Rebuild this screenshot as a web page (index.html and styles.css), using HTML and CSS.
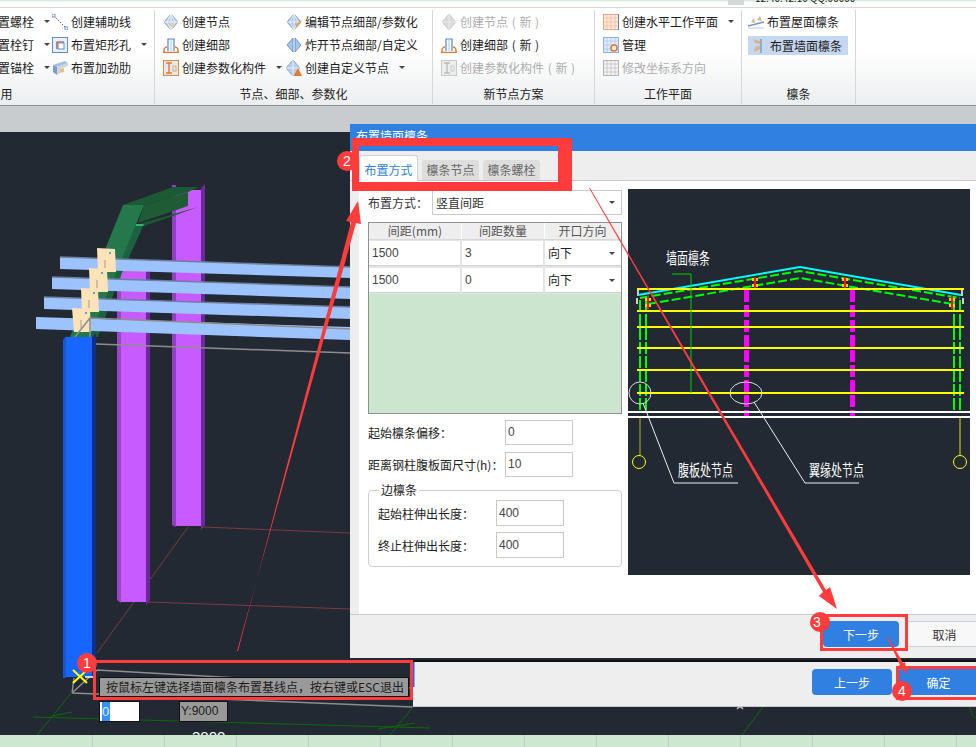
FILE: index.html
```html
<!DOCTYPE html>
<html lang="zh-CN">
<head>
<meta charset="utf-8">
<title>布置墙面檩条</title>
<link rel="stylesheet" href="styles.css">
</head>
<body>
<svg class="defs" width="0" height="0" aria-hidden="true">
  <defs>
    <symbol id="i-node" viewBox="0 0 16 16"><path d="M8 0 15 8 8 16 1 8Z" fill="#b7cde9" stroke="#6f97c8" stroke-width=".8"/><path d="M8 0V16M1 8H15M4 8 8 0 12 8 8 16Z" fill="none" stroke="#fff" stroke-width=".7"/><circle cx="9" cy="11" r="2" fill="#f1c9a0"/></symbol>
    <symbol id="i-node-edit" viewBox="0 0 16 16"><path d="M8 0 15 8 8 16 1 8Z" fill="#a9c5ea" stroke="#5f8fc8" stroke-width=".8"/><path d="M8 0V16M1 8H15M4 8 8 0 12 8 8 16Z" fill="none" stroke="#fff" stroke-width=".7"/><path d="M10 12 15 7" stroke="#e8a33a" stroke-width="2"/></symbol>
    <symbol id="i-node-split" viewBox="0 0 16 16"><path d="M7 1V15L1 8ZM9 1V15L15 8Z" fill="#a9c5ea" stroke="#4f86c8" stroke-width=".8"/></symbol>
    <symbol id="i-node-custom" viewBox="0 0 16 16"><path d="M7 0 14 8 7 16 0 8Z" fill="#b7cde9" stroke="#6f97c8" stroke-width=".8"/><path d="M7 0V16M0 8H14" stroke="#fff" stroke-width=".7"/><path d="M12 8 16 16H8Z" fill="#e8762c"/></symbol>
    <symbol id="i-node-off" viewBox="0 0 16 16"><path d="M8 0 15 8 8 16 1 8Z" fill="#d9d9d9" stroke="#c4c4c4" stroke-width=".8"/><path d="M8 0V16M1 8H15" stroke="#f2f2f2" stroke-width=".8"/></symbol>
    <symbol id="i-detail" viewBox="0 0 16 16"><path d="M5 14V2H11V14" fill="#fff" stroke="#4f86c8" stroke-width="1.2"/><path d="M8 2V14" stroke="#a9c5ea"/><path d="M1 16V13C1 11 3 10 4 10M15 16V13C15 11 13 10 12 10M0 15.5H16" fill="none" stroke="#e8762c" stroke-width="1.4"/></symbol>
    <symbol id="i-param" viewBox="0 0 16 16"><rect x=".5" y=".5" width="15" height="15" fill="#dfeaf7" stroke="#e8863c"/><path d="M3 3H9M3 13H9M6 3V13" stroke="#e8762c" stroke-width="1.4" fill="none"/><rect x="10" y="6" width="3" height="5" fill="none" stroke="#e8a36c"/></symbol>
    <symbol id="i-param-off" viewBox="0 0 16 16"><rect x=".5" y=".5" width="15" height="15" fill="#eee" stroke="#c8c8c8"/><path d="M3 3H9M3 13H9M6 3V13" stroke="#bbb" stroke-width="1.4" fill="none"/><rect x="10" y="6" width="3" height="5" fill="none" stroke="#ccc"/></symbol>
    <symbol id="i-line" viewBox="0 0 16 16"><path d="M1.500 1.500 14.500 14.500" stroke="#555" stroke-dasharray="1.500 1.500"/><rect x="0" y="0" width="3" height="3" fill="#fff" stroke="#3f7fc8" stroke-width=".8"/><rect x="13" y="13" width="3" height="3" fill="#fff" stroke="#3f7fc8" stroke-width=".8"/></symbol>
    <symbol id="i-hole" viewBox="0 0 16 16"><rect x=".5" y=".5" width="15" height="15" fill="#e8f0fa" stroke="#5f8fc8"/><path d="M5 12V5H12" fill="none" stroke="#c8322c" stroke-width="1.2"/><rect x="6" y="6" width="6" height="6" fill="#fff" stroke="#5f8fc8"/></symbol>
    <symbol id="i-rib" viewBox="0 0 16 16"><path d="M1 5 13 1 16 3 5 7Z" fill="#a9c0dc"/><path d="M1 5 5 7V15L1 12Z" fill="#7f9cc0"/><path d="M5 7 16 3V6L8 9V13L5 15Z" fill="#c9d6e6"/><path d="M8 9 12 8V12L8 13Z" fill="#f0c070"/></symbol>
    <symbol id="i-plane" viewBox="0 0 16 16"><rect x=".5" y=".5" width="15" height="15" fill="#fde9dc" stroke="#e8a888"/><path d="M4 1V15M8 1V15M12 1V15M1 4H15M1 8H15M1 12H15" stroke="#efb79a" stroke-width=".7"/><path d="M15.500 0V16" stroke="#4f86c8"/></symbol>
    <symbol id="i-manage" viewBox="0 0 16 16"><rect x=".5" y=".5" width="15" height="15" fill="#dfeafa" stroke="#8fb2e0"/><path d="M4 1V15M8 1V15M12 1V15M1 4H15M1 8H15M1 12H15" stroke="#a9c5ea" stroke-width=".7"/><circle cx="11" cy="11" r="3" fill="#fff" stroke="#e8762c" stroke-width="1.6"/></symbol>
    <symbol id="i-grid-off" viewBox="0 0 16 16"><rect x=".5" y=".5" width="15" height="15" fill="#f3f3f3" stroke="#b5b5b5"/><path d="M4 1V15M8 1V15M12 1V15M1 4H15M1 8H15M1 12H15" stroke="#bdbdbd" stroke-width=".7"/></symbol>
    <symbol id="i-roof" viewBox="0 0 16 16"><path d="M0 12 16 8" stroke="#6f97c8" stroke-width="1.500"/><path d="M3 8 6 4 7 9ZM9 6 12 2 14 7Z" fill="#d8b48a"/><path d="M0 14H16" stroke="#b9cce4"/></symbol>
    <symbol id="i-wall" viewBox="0 0 16 16"><path d="M10 1V15" stroke="#8a9cb4" stroke-width="1.500"/><path d="M2 1 9 3V6L4 5ZM4 9 9 8V11L3 14Z" fill="#d8b48a"/></symbol>
  </defs>
</svg>

<div class="app">
  <div class="topstrip"><span class="topstrip-icon"></span><span class="topstrip-text">12:40:42:10 QQ:00000</span></div>

  <div class="ribbon">
    <section class="group g1">
      <div class="rows rows-g1">
        <div class="item"><span class="blank-icon"></span>布置螺栓<i class="caret"></i></div>
        <div class="item"><svg class="ic"><use href="#i-line"/></svg>创建辅助线</div>
        <div class="item"><span class="blank-icon"></span>布置栓钉<i class="caret"></i></div>
        <div class="item"><svg class="ic"><use href="#i-hole"/></svg>布置矩形孔<i class="caret"></i></div>
        <div class="item"><span class="blank-icon"></span>布置锚栓<i class="caret"></i></div>
        <div class="item"><svg class="ic"><use href="#i-rib"/></svg>布置加劲肋</div>
      </div>
      <div class="group-label">常用</div>
    </section>
    <section class="group g2">
      <div class="rows rows-g2">
        <div class="item"><svg class="ic"><use href="#i-node"/></svg>创建节点</div>
        <div class="item"><svg class="ic"><use href="#i-node-edit"/></svg>编辑节点细部/参数化</div>
        <div class="item"><svg class="ic"><use href="#i-detail"/></svg>创建细部</div>
        <div class="item"><svg class="ic"><use href="#i-node-split"/></svg>炸开节点细部/自定义</div>
        <div class="item"><svg class="ic"><use href="#i-param"/></svg>创建参数化构件<i class="caret"></i></div>
        <div class="item"><svg class="ic"><use href="#i-node-custom"/></svg>创建自定义节点<i class="caret"></i></div>
      </div>
      <div class="group-label">节点、细部、参数化</div>
    </section>
    <section class="group g3">
      <div class="rows">
        <div class="item off"><svg class="ic"><use href="#i-node-off"/></svg><span class="spaced">创建节点 ( 新 )</span></div>
        <div class="item"><svg class="ic"><use href="#i-detail"/></svg><span class="spaced">创建细部 ( 新 )</span></div>
        <div class="item off"><svg class="ic"><use href="#i-param-off"/></svg><span class="spaced">创建参数化构件 ( 新 )</span></div>
      </div>
      <div class="group-label">新节点方案</div>
    </section>
    <section class="group g4">
      <div class="rows">
        <div class="item"><svg class="ic"><use href="#i-plane"/></svg>创建水平工作平面<i class="caret"></i></div>
        <div class="item"><svg class="ic"><use href="#i-manage"/></svg>管理</div>
        <div class="item off"><svg class="ic"><use href="#i-grid-off"/></svg>修改坐标系方向</div>
      </div>
      <div class="group-label">工作平面</div>
    </section>
    <section class="group g5">
      <div class="rows">
        <div class="item"><svg class="ic"><use href="#i-roof"/></svg>布置屋面檩条</div>
        <div class="item active"><svg class="ic"><use href="#i-wall"/></svg>布置墙面檩条</div>
      </div>
      <div class="group-label">檩条</div>
    </section>
  </div>

  <div class="greybar"></div>

  <main class="workspace">
    <svg class="scene" viewBox="0 132 976 603" width="976" height="603">
      <g fill="none" stroke-width="1">
        <path d="M203 527 350 533M148 602 350 609M188 527 97 653" stroke="#7c3a40"/>
        <path d="M72 693 413 707M97 670 413 688M72 693 97 670M72 693 74 678" stroke="#8d8d8d" stroke-width="1.500"/>
        <path d="M33 717 430 728M37 735 72 692M52 716 72 712M390 735 413 707M378 729 415 723M742 735 763 707" stroke="#0c6a0c"/>
        <path d="M970 707C972 716 974 718 976 718" stroke="#0c6a0c"/>
        <path d="M737 709Q740 705 743 709" stroke="#bbbbbb" stroke-width="1.500"/>
      </g>
      <!-- purple columns -->
      <path d="M117 270H121V603L117 600Z" fill="#9a46c8"/>
      <rect x="121" y="270" width="25" height="332" fill="#c85bff"/>
      <path d="M146 270H150V600L146 605Z" fill="#6b2a9c"/>
      <path d="M172 185H176V527L172 525Z" fill="#8f3fc0"/>
      <rect x="176" y="190" width="25" height="336" fill="#c85bff"/>
      <path d="M201 188 205 184V525L201 530Z" fill="#6b2a9c"/>
      <!-- rafter -->
      <path d="M123 205 173 187H199L188 192 144 205Z" fill="#1c5a35"/>
      <path d="M144 205 188 192V206L138 223Z" fill="#1f5c36"/>
      <path d="M139 224 198 207 173 216 144 226Z" fill="#1c5a35"/>
      <path d="M136 224H144L118 282 98 337H90Z" fill="#1b6340"/>
      <path d="M123 205H144L90 337H70Z" fill="#25784c"/>
      <path d="M136 224H144L143 226H136Z" fill="#39b46c"/>
      <!-- purlins -->
      <g fill="#9dc3ff">
        <path d="M60 257 350 267V278L60 269Z"/>
        <path d="M52 277 350 287V299L52 289Z"/>
        <path d="M44 297 350 307V319L44 309Z"/>
        <path d="M36 317 350 327V340L36 329Z"/>
      </g>
      <path d="M60 257 350 267M52 277 350 287M44 297 350 307" stroke="#6f7f9a" stroke-width="1.500" fill="none"/>
      <!-- plates -->
      <g fill="#fde3b8">
        <path d="M97 248 115 249 116 272H98Z"/>
        <path d="M89 268 107 269 108 292H90Z"/>
        <path d="M81 288 98 289 99 312H82Z"/>
        <path d="M72 308 90 309 91 332H74Z"/>
      </g>
      <g fill="#3a8ad0">
        <circle cx="110" cy="253" r="1"/><circle cx="102" cy="273" r="1"/><circle cx="94" cy="293" r="1"/><circle cx="86" cy="313" r="1"/>
      </g>
      <path d="M105 260V268M97 280V288M89 300V308M81 320V328" stroke="#a89c88" fill="none"/>
      <path d="M90 318 350 329M96 344 350 353M75 337 90 318V337" stroke="#8d8d8d" stroke-width="1.500" fill="none"/>
      <!-- blue column -->
      <path d="M63 340 66 336V678H63Z" fill="#1558d0"/>
      <rect x="66" y="337" width="26" height="340" fill="#1666ff"/>
      <path d="M92 338 96 333V674L92 678Z" fill="#0f2f8a"/>
      <!-- cursor -->
      <path d="M73 670 87 683M87 670 73 683" stroke="#ffff00" stroke-width="2"/>
      <path d="M85 677H96" stroke="#fff" stroke-width="1.500"/>
      <text class="scene-dim" x="192" y="742">3000</text>
    </svg>

    <div class="prompt">按鼠标左键选择墙面檩条布置基线点<span class="tc">，</span>按右键或ESC退出</div>
    <div class="coord-x"><span class="coord-sel">0</span></div>
    <div class="coord-y">Y:9000</div>
  </main>

  <div class="bottomstrip"></div>

  <!-- rear dialog footer -->
  <div class="rear-dialog">
    <button class="btn btn-primary btn-prev">上一步</button>
    <button class="btn btn-primary btn-ok">确定</button>
  </div>

  <!-- front dialog -->
  <div class="dialog">
    <div class="dialog-title">布置墙面檩条</div>
    <div class="tabs">
      <div class="tab tab-active">布置方式</div>
      <div class="tab">檩条节点</div>
      <div class="tab">檩条螺栓</div>
    </div>
    <div class="dialog-body">
      <div class="form">
        <div class="select-row">
          <label class="select-label">布置方式<span class="tc">：</span></label>
          <div class="select select-wide">竖直间距<i class="caret"></i></div>
        </div>
        <div class="table">
          <div class="t-row t-head"><div class="th">间距(mm)</div><div class="th">间距数量</div><div class="th">开口方向</div></div>
          <div class="t-row t-line"><div class="td">1500</div><div class="td">3</div><div class="td td-select">向下<i class="caret"></i></div></div>
          <div class="t-row t-line"><div class="td">1500</div><div class="td">0</div><div class="td td-select">向下<i class="caret"></i></div></div>
          <div class="t-fill"></div>
        </div>
        <div class="fields">
          <div class="field"><label class="field-label">起始檩条偏移<span class="tc">：</span></label><div class="input">0</div></div>
          <div class="field"><label class="field-label">距离钢柱腹板面尺寸(h)<span class="tc">：</span></label><div class="input">10</div></div>
        </div>
        <div class="fieldset">
          <span class="legend">边檩条</span>
          <div class="field field-tall"><label class="field-label field-label-inner">起始柱伸出长度<span class="tc">：</span></label><div class="input input-tall">400</div></div>
          <div class="field field-tall"><label class="field-label field-label-inner">终止柱伸出长度<span class="tc">：</span></label><div class="input input-tall">400</div></div>
        </div>
      </div>

      <svg class="cad" viewBox="628 189 342 386" width="342" height="386">
        <rect x="628" y="189" width="342" height="386" fill="#222933"/>
        <g fill="none">
          <path d="M638 288V296M637 298V304M962 288V296M963 298V304" stroke="#ccc" stroke-width="2"/>
          <path d="M640 300V412M646 300V412M960 300V412M954 300V412" stroke="#00ff00" stroke-width="2" stroke-dasharray="12 2"/>
          <path d="M746.500 290V418M852.500 290V418" stroke="#ff00ff" stroke-width="5" stroke-dasharray="12 3"/>
          <path d="M640 298 800 271 960 298" stroke="#00ff00" stroke-width="2" stroke-dasharray="9 3"/>
          <path d="M648 304 800 278 952 304" stroke="#00ff00" stroke-width="2" stroke-dasharray="9 3"/>
          <path d="M638 295 800 267 961 295" stroke="#00ffff" stroke-width="2"/>
          <path d="M637 289H964M637 311H964M637 327H964M637 348H964M637 370H964M637 393H964" stroke="#ffff00" stroke-width="2"/>
          <path d="M672 274H691V393" stroke="#00d000"/>
          <path d="M628 412H970M628 417H970" stroke="#fff" stroke-width="2"/>
          <circle cx="640" cy="393" r="11" stroke="#ddd"/>
          <ellipse cx="746" cy="393" rx="16" ry="11" stroke="#ddd"/>
          <path d="M643 403 674 483H738M754 402 805 483H859" stroke="#eee"/>
          <path d="M640 418V455" stroke="#b8b820"/>
          <path d="M960 418V455" stroke="#e0e020"/>
          <circle cx="639" cy="462" r="6.500" stroke="#ffff00"/>
          <circle cx="960" cy="462" r="6.500" stroke="#ffff00"/>
        </g>
        <g fill="#ffd000">
          <rect x="645" y="298" width="6" height="3"/><rect x="645" y="304" width="6" height="3"/>
          <rect x="752" y="278" width="6" height="3"/><rect x="752" y="284" width="6" height="3"/>
          <rect x="842" y="278" width="6" height="3"/><rect x="842" y="284" width="6" height="3"/>
          <rect x="949" y="298" width="6" height="3"/><rect x="949" y="304" width="6" height="3"/>
        </g>
        <path d="M648 296V309M755 277V288M845 277V288M952 296V309" stroke="#e02020" stroke-width="2"/>
        <text class="cad-text" transform="translate(666 264) scale(1 1.400)">墙面檩条</text>
        <text class="cad-text" transform="translate(678 476) scale(1 1.400)">腹板处节点</text>
        <text class="cad-text" transform="translate(809 476) scale(1 1.400)">翼缘处节点</text>
      </svg>
    </div>
    <div class="dialog-foot">
      <button class="btn btn-primary btn-next">下一步</button>
      <button class="btn btn-plain">取消</button>
    </div>
  </div>

  <!-- annotations -->
  <svg class="marks" viewBox="0 0 976 747" width="976" height="747">
    <rect x="413" y="662" width="1.500" height="25" fill="#1666ff"/>
    <g fill="#ff3b3b">
      <path fill-rule="evenodd" d="M352 138H572V191H352ZM359 146V182H558V146Z"/>
      <path fill-rule="evenodd" d="M820 614H908V651H820ZM823 617V648H905V617Z"/>
      <path fill-rule="evenodd" d="M93 660H413V700H93ZM96 663V697H410V663Z"/>
      <path fill-rule="evenodd" d="M896 666H976V700H896ZM899 669V697H976V669Z"/>
      <path d="M237 651 238 651 351 222 346 221 358 201 361 224 356 223Z"/>
      <path d="M589 188 590 188 826 590 830 587 837 609 819 596 823 592Z"/>
      <path d="M887 637 888 637 903 663 905 662 907 674 898 666 900 665Z"/>
      <circle cx="87" cy="663" r="10"/>
      <circle cx="347" cy="161" r="10"/>
      <circle cx="820" cy="622" r="10"/>
      <circle cx="902" cy="691" r="10"/>
    </g>
    <g class="badge-text">
      <text x="87" y="668">1</text>
      <text x="347" y="166">2</text>
      <text x="817" y="627">3</text>
      <text x="902" y="696">4</text>
    </g>
  </svg>
</div>
</body>
</html>
```

FILE: styles.css
```css
* { box-sizing: border-box; }

html, body {
  margin: 0;
  padding: 0;
  height: 100%;
  overflow: hidden;
}

body {
  font-family: "Noto Sans CJK SC", "Liberation Sans", sans-serif;
  font-size: 12px;
  color: #1c1c1c;
}

.defs { position: absolute; }
.tc { font-family: "Noto Sans CJK TC", sans-serif; }

.app {
  position: relative;
  width: 976px;
  height: 747px;
  display: flex;
  flex-direction: column;
  overflow: hidden;
  background: #222933;
}

/* top */
.topstrip {
  height: 8px;
  flex: none;
  overflow: hidden;
  display: flex;
  background: linear-gradient(#d9eedb 0, #d9eedb 1px, #fff 2px, #fff 7px, #d6d8da 7px);
  line-height: 10px;
  padding-left: 728px;
  font-size: 10px;
}
.topstrip-icon { width: 16px; height: 5px; flex: none; margin-right: 11px; background: #d8d8d8; }
.topstrip-text { display: block; margin-top: -7px; color: #222; }

/* ribbon */
.ribbon {
  height: 98px;
  flex: none;
  display: flex;
  background: linear-gradient(#fff 45%, #eceeef 100%);
  border-bottom: 1px solid #8f9193;
  box-shadow: 0 1px 0 #b4b6b8;
}
.group {
  flex: none;
  height: 94px;
  margin-top: 2px;
  display: flex;
  flex-direction: column;
  border-right: 1px solid #d5d7d9;
}
.g1 { margin-left: -153px; width: 308px; padding-left: 120px; }
.g2 { width: 278px; padding-left: 8px; }
.g3 { width: 162px; padding-left: 8px; }
.g4 { width: 147px; padding-left: 8px; }
.g5 { width: 114px; padding-left: 6px; }

.rows {
  flex: 1;
  display: flex;
  flex-direction: column;
  align-items: flex-start;
}
.rows-g1 { display: grid; grid-template-columns: 85px auto; grid-auto-rows: 23px; align-content: start; }
.rows-g2 { display: grid; grid-template-columns: 123px auto; grid-auto-rows: 23px; align-content: start; }

.item {
  height: 23px;
  display: flex;
  align-items: center;
  gap: 3px;
  white-space: nowrap;
}
.spaced { word-spacing: 1px; }
.off { color: #adadad; }
.active {
  height: 19px;
  margin-top: 3px;
  width: 100px;
  padding-left: 3px;
  background: #c6d7f0;
}
.ic { width: 16px; height: 16px; flex: none; }
.blank-icon { width: 16px; height: 16px; flex: none; }

.caret {
  display: inline-block;
  width: 0;
  height: 0;
  margin-left: 7px;
  border-left: 3px solid transparent;
  border-right: 3px solid transparent;
  border-top: 3px solid #444;
}

.group-label {
  height: 20px;
  line-height: 20px;
  text-align: center;
  color: #222;
}
.g1 .group-label { margin-left: -120px; }
.g2 .group-label { margin-left: -8px; }
.g3 .group-label { margin-left: -8px; }
.g4 .group-label { margin-left: -8px; }
.g5 .group-label { margin-left: -6px; }

.greybar { height: 26px; flex: none; background: #c9ccce; }

/* canvas */
.workspace {
  position: relative;
  flex: 1;
  overflow: hidden;
  background: #222933;
}
.scene { position: absolute; left: 0; top: 0; display: block; }
.scene-dim { fill: #fff; font-family: "Liberation Sans", sans-serif; font-size: 15px; }

.prompt {
  position: absolute;
  left: 99px;
  top: 545px;
  width: 310px;
  height: 20px;
  line-height: 18px;
  padding-left: 6px;
  background: #999;
  border: 1px solid #111;
  color: #1c1c1c;
  white-space: nowrap;
}
.coord-x {
  position: absolute;
  left: 99px;
  top: 569px;
  width: 41px;
  height: 21px;
  background: #fff;
  border: 1px solid #111;
  line-height: 19px;
  padding-left: 2px;
  font-family: "Liberation Sans", sans-serif;
  font-size: 13px;
}
.coord-sel { display: inline-block; width: 8px; background: #3390ff; color: #dfefff; }
.coord-y {
  position: absolute;
  left: 179px;
  top: 569px;
  width: 49px;
  height: 21px;
  background: #999;
  border: 1px solid #111;
  line-height: 19px;
  padding-left: 1px;
  font-family: "Liberation Sans", sans-serif;
  font-size: 12px;
}

.bottomstrip {
  height: 12px;
  flex: none;
  background: repeating-linear-gradient(90deg, #cde7d0 0, #cde7d0 71px, #c8cdc9 71px, #c8cdc9 72px);
  background-position: 21px 0;
}

/* dialogs */
.rear-dialog {
  position: absolute;
  left: 413px;
  top: 660px;
  width: 563px;
  height: 47px;
  background: #eeeeee;
  border-top: 2px solid #111;
  border-bottom: 1px solid #c6c8cc;
}
.btn {
  display: block;
  border: 0;
  padding: 0;
  font: inherit;
  height: 26px;
  border-radius: 4px;
}
.btn-primary { background: #2f80e0; color: #fff; }
.btn-prev { position: absolute; left: 399px; top: 7px; width: 80px; }
.btn-ok { position: absolute; left: 484px; top: 7px; width: 90px; padding-right: 7px; }

.dialog {
  position: absolute;
  left: 350px;
  top: 124px;
  width: 626px;
  height: 534px;
  display: flex;
  flex-direction: column;
  background: #eeeeee;
}
.dialog-title {
  height: 27px;
  flex: none;
  background: #2f80e0;
  color: #fff;
  line-height: 24px;
  padding-left: 6px;
}
.tabs {
  height: 30px;
  flex: none;
  display: flex;
  align-items: flex-end;
  gap: 4px;
  padding-left: 9px;
  border-bottom: 1px solid #c8c8c8;
}
.tab {
  width: 57px;
  height: 20px;
  line-height: 20px;
  text-align: center;
  background: #dddddd;
  color: #666;
  border-radius: 3px 3px 0 0;
}
.tab-active {
  width: 59px;
  height: 26px;
  line-height: 27px;
  margin-bottom: -1px;
  background: #fff;
  color: #2f80e0;
  border: 1px solid #d0d0d0;
  border-bottom: 0;
}

.dialog-body {
  flex: 1;
  margin-left: 9px;
  padding: 8px 0 0 9px;
  background: #fff;
  display: flex;
  gap: 6px;
  min-height: 0;
  color: #333;
}
.form { width: 254px; flex: none; padding-top: 1px; }
.select-row { display: flex; align-items: center; height: 25px; }
.select-label { width: 64px; flex: none; white-space: nowrap; }
.select {
  display: flex;
  align-items: center;
  justify-content: space-between;
  border: 1px solid #ccc;
  background: #fff;
  padding: 0 6px 0 3px;
}
.select-wide { width: 190px; height: 25px; }
.select .caret, .td-select .caret { margin-left: 0; }

.table {
  margin-top: 7px;
  height: 192px;
  display: flex;
  flex-direction: column;
  border: 1px solid #8c9193;
}
.t-row { display: grid; grid-template-columns: 93px 83px 76px; flex: none; }
.t-head { height: 17px; background: #eeeeee; border-bottom: 1px solid #d8d8d8; }
.th { text-align: center; line-height: 16px; color: #555; border-right: 1px solid #fff; }
.t-line { height: 27px; background: #e4e6e6; padding-top: 1px; }
.td {
  height: 25px;
  margin-right: 2px;
  background: #fff;
  border-bottom: 1px solid #d0d0d0;
  line-height: 24px;
  padding-left: 3px;
  font-family: "Liberation Sans", "Noto Sans CJK SC", sans-serif;
  color: #444;
}
.td-select {
  display: flex;
  align-items: center;
  justify-content: space-between;
  margin-right: 0;
  padding-right: 6px;
  color: #222;
  font-family: "Noto Sans CJK SC", sans-serif;
}
.t-fill { flex: 1; background: #cce5cf; }

.fields { margin-top: 6px; display: flex; flex-direction: column; gap: 7px; }
.field { display: flex; align-items: center; height: 25px; }
.field-label { width: 137px; flex: none; white-space: nowrap; color: #222; }
.field-label-inner { width: 118px; }
.input {
  width: 68px;
  height: 25px;
  border: 1px solid #c8c8c8;
  line-height: 23px;
  padding-left: 2px;
  font-family: "Liberation Sans", sans-serif;
  color: #444;
}
.field-tall { height: 26px; }
.input-tall { height: 26px; line-height: 24px; }

.fieldset {
  position: relative;
  margin-top: 13px;
  height: 77px;
  padding: 9px 0 0 9px;
  border: 1px solid #cfcfcf;
  border-radius: 4px;
  display: flex;
  flex-direction: column;
  gap: 6px;
}
.legend {
  position: absolute;
  left: 10px;
  top: -8px;
  padding: 0 2px;
  background: #fff;
  line-height: 14px;
  color: #222;
}

.cad { display: block; flex: none; }
.cad-text { fill: #fff; font-size: 11px; font-family: "Noto Sans CJK SC", sans-serif; }

.dialog-foot {
  height: 44px;
  flex: none;
  border-top: 1px solid #c8ccd4;
  background: #eeeeee;
  display: flex;
  padding: 6px 0 0 473px;
  gap: 8px;
}
.btn-next { width: 76px; flex: none; }
.btn-plain {
  width: 90px;
  flex: none;
  background: #f8f8f8;
  color: #333;
  border: 1px solid #c8d0e0;
  border-radius: 0;
  padding-right: 15px;
}

/* annotations */
.marks { position: absolute; left: 0; top: 0; display: block; pointer-events: none; }
.badge-text text {
  fill: #fff;
  font-family: "Liberation Sans", sans-serif;
  font-size: 14px;
  text-anchor: middle;
}
```
